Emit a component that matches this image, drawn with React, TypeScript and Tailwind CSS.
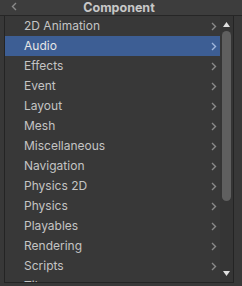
import React from "react";

const items = [
  "2D Animation",
  "Audio",
  "Effects",
  "Event",
  "Layout",
  "Mesh",
  "Miscellaneous",
  "Navigation",
  "Physics 2D",
  "Physics",
  "Playables",
  "Rendering",
  "Scripts",
  "Tilemap",
];

function Chevron({ active }: { active: boolean }) {
  return (
    <svg width="6" height="9" viewBox="0 0 6 9" className="shrink-0">
      <path
        d="M1 1 L4.5 4.5 L1 8"
        fill="none"
        stroke={active ? "#9fb6dc" : "#8a8a8a"}
        strokeWidth="1.4"
      />
    </svg>
  );
}

export default function App() {
  return (
    <div className="w-[242px] h-[286px] bg-[#383838] overflow-hidden font-['Inter','Noto_Sans',sans-serif] text-[12px]">
      {/* header */}
      <div className="h-[16px] bg-[#3d3d3d] border-b border-[#262626] flex items-center relative">
        <svg width="6" height="9" viewBox="0 0 6 9" className="absolute left-[11px] top-[2px]">
          <path d="M5 1 L1.5 4.5 L5 8" fill="none" stroke="#8a8a8a" strokeWidth="1.4" />
        </svg>
        <div className="w-full text-center pr-[4px] font-bold text-[#c8c8c8] leading-[15px] text-[12.5px]">Component</div>
      </div>

      {/* body */}
      <div className="ml-[4px] w-[230px] h-[267px] border-l border-r border-b border-[#242424] flex">
        <div className="flex-1 overflow-hidden">
          {items.map((name) => {
            const active = name === "Audio";
            return (
              <div
                key={name}
                className={`h-[20px] flex items-center pl-[19px] pr-[3px] ${active ? "bg-[#3d5e94] text-[#e6e6e6]" : "text-[#c4c4c4]"}`}
              >
                <span className="flex-1 leading-[20px]">{name}</span>
                <Chevron active={active} />
              </div>
            );
          })}
        </div>

        {/* scrollbar */}
        <div className="w-[13px] bg-[#353535] flex flex-col items-center pt-[6px] pb-[6px]">
          <svg width="7" height="5" viewBox="0 0 7 5">
            <path d="M3.5 0 L7 5 L0 5 Z" fill="#e0e0e0" />
          </svg>
          <div className="mt-[4px] w-[9px] h-[170px] rounded-full bg-[#5f5f5f]" />
          <div className="flex-1" />
          <svg width="7" height="5" viewBox="0 0 7 5">
            <path d="M0 0 L7 0 L3.5 5 Z" fill="#e0e0e0" />
          </svg>
        </div>
      </div>
    </div>
  );
}
